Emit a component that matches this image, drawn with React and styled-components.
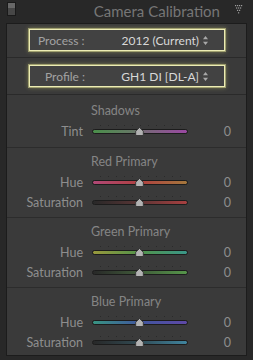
import React from 'react';
import styled, { createGlobalStyle } from 'styled-components';

const Global = createGlobalStyle`
  html, body { margin: 0; padding: 0; background: #282828; }
  body {
    width: 253px;
    height: 360px;
    overflow: hidden;
    font-family: Lato, "Liberation Sans", sans-serif;
  }
  * { box-sizing: border-box; }
`;

const Frame = styled.div`
  width: 253px;
  height: 360px;
  background: #282828;
  display: flex;
  flex-direction: column;
`;

const Header = styled.div`
  height: 23px;
  display: flex;
  align-items: center;
  padding: 0 10px 0 7px;
`;

const SoloSwitch = styled.div`
  width: 9px;
  height: 14px;
  align-self: flex-start;
  margin-top: 2px;
  border: 1px solid #1a1a1a;
  background: linear-gradient(#686868 0 45%, #474747 45% 100%);
`;

const HeaderTitle = styled.div`
  flex: 1;
  text-align: right;
  color: #767676;
  font-size: 15px;
  margin-right: 15px;
  line-height: 23px;
`;

const CollapseIcon = styled.svg`
  width: 8px;
  height: 10px;
  align-self: flex-start;
  margin-top: 5px;
`;

const Panel = styled.div`
  margin: 0 6px;
  border: 1px solid #1c1c1c;
  background: #3a3a3a;
  padding-bottom: 3px;
`;

const SelectBlock = styled.div`
  padding: ${p => p.$pt}px 0 ${p => p.$pb}px 22px;
  border-bottom: 1px solid #2a2a2a;
`;

const SelectBox = styled.div`
  width: 196px;
  height: 22px;
  display: flex;
  align-items: center;
  padding: 0 16px 0 ${p => p.$indent}px;
  background: #424242;
  border: 1px solid #ececb4;
  box-shadow: 0 0 0 1px rgba(226, 226, 150, 0.5), 0 0 4px 1px rgba(214, 214, 120, 0.4);
  font-size: 12px;
`;

const SelectLabel = styled.span`
  color: #a2a2a2;
  flex: 1;
`;

const SelectValue = styled.span`
  color: #d8d8d8;
`;

const UpDown = styled.svg`
  width: 5px;
  height: 9px;
  margin-left: 4px;
`;

const Section = styled.div`
  padding: ${p => p.$pt}px 0 ${p => p.$pb}px 0;
  border-bottom: ${p => (p.$last ? 'none' : '1px solid #2c2c2c')};
`;

const SectionTitle = styled.div`
  padding-left: 84px;
  height: 14px;
  line-height: 14px;
  color: #858585;
  font-size: 12.5px;
  margin-bottom: 3px;
`;

const Row = styled.div`
  height: 20px;
  display: flex;
  align-items: center;
`;

const RowLabel = styled.div`
  width: 76px;
  text-align: right;
  color: #8e8e8e;
  font-size: 12.5px;
`;

const Slider = styled.div`
  position: relative;
  width: 96px;
  height: 20px;
  margin-left: 9px;
  &::before {
    content: '';
    position: absolute;
    left: 8px;
    top: 4px;
    width: 81px;
    height: 1px;
    background: repeating-linear-gradient(to right, #2a2a2a 0 1px, transparent 1px 8px);
  }
`;

const Track = styled.div`
  position: absolute;
  left: 0;
  right: 0;
  top: 8px;
  height: 5px;
  border: 1px solid #1c1c1c;
  border-radius: 3px;
  background: ${p => p.$gradient};
`;

const Thumb = styled.svg`
  position: absolute;
  left: 43px;
  top: 6px;
  width: 9px;
  height: 9px;
`;

const Value = styled.div`
  width: 43px;
  text-align: right;
  color: #8e8e8e;
  font-size: 12.5px;
`;

const gradients = {
  tint: 'linear-gradient(90deg, #4a8f4a, #687668 45%, #776878 55%, #9a48a2)',
  redHue: 'linear-gradient(90deg, #b04876, #b04040 50%, #a4773c)',
  redSat: 'linear-gradient(90deg, #282828, #553434 45%, #a84040)',
  greenHue: 'linear-gradient(90deg, #98983c, #52934a 50%, #3a9688)',
  greenSat: 'linear-gradient(90deg, #282828, #3e5638 45%, #56964a)',
  blueHue: 'linear-gradient(90deg, #389482, #40569e 50%, #5e48a6)',
  blueSat: 'linear-gradient(90deg, #282828, #30474f 45%, #40849e)',
};

const sections = [
  { title: 'Shadows', pt: 9, pb: 6, rows: [{ label: 'Tint', g: 'tint' }] },
  {
    title: 'Red Primary', pt: 7, pb: 5,
    rows: [{ label: 'Hue', g: 'redHue' }, { label: 'Saturation', g: 'redSat' }],
  },
  {
    title: 'Green Primary', pt: 7, pb: 5,
    rows: [{ label: 'Hue', g: 'greenHue' }, { label: 'Saturation', g: 'greenSat' }],
  },
  {
    title: 'Blue Primary', pt: 7, pb: 0, last: true,
    rows: [{ label: 'Hue', g: 'blueHue' }, { label: 'Saturation', g: 'blueSat' }],
  },
];

function SliderRow({ label, gradient }) {
  return (
    <Row>
      <RowLabel>{label}</RowLabel>
      <Slider>
        <Track $gradient={gradient} />
        <Thumb viewBox="0 0 9 9">
          <path d="M4.5 0.5 L8.3 4.2 V8.5 H0.7 V4.2 Z" fill="#b2b2b2" stroke="#2c2c2c" strokeWidth="0.8" />
        </Thumb>
      </Slider>
      <Value>0</Value>
    </Row>
  );
}

function Select({ label, value, indent, pt, pb }) {
  return (
    <SelectBlock $pt={pt} $pb={pb}>
      <SelectBox $indent={indent}>
        <SelectLabel>{label}</SelectLabel>
        <SelectValue>{value}</SelectValue>
        <UpDown viewBox="0 0 5 9">
          <path d="M2.5 0 L5 3.2 H0 Z M2.5 9 L5 5.8 H0 Z" fill="#a8a8a8" />
        </UpDown>
      </SelectBox>
    </SelectBlock>
  );
}

export default function App() {
  const dots = [];
  for (let r = 0; r < 4; r++) {
    for (let c = 0; c < 4 - r; c++) {
      dots.push(<rect key={`${r}-${c}`} x={c * 2 + r} y={r * 2.4} width="1.2" height="1.2" fill="#9c9c9c" />);
    }
  }
  return (
    <Frame>
      <Global />
      <Header>
        <SoloSwitch />
        <HeaderTitle>Camera Calibration</HeaderTitle>
        <CollapseIcon viewBox="0 0 8 10">{dots}</CollapseIcon>
      </Header>
      <Panel>
        <Select label="Process :" value="2012 (Current)" indent={8} pt={5} pb={6} />
        <Select label="Profile :" value="GH1 DI [DL-A]" indent={15} pt={7} pb={7} />
        {sections.map(s => (
          <Section key={s.title} $pt={s.pt} $pb={s.pb} $last={s.last}>
            <SectionTitle>{s.title}</SectionTitle>
            {s.rows.map(r => (
              <SliderRow key={r.label} label={r.label} gradient={gradients[r.g]} />
            ))}
          </Section>
        ))}
      </Panel>
    </Frame>
  );
}
